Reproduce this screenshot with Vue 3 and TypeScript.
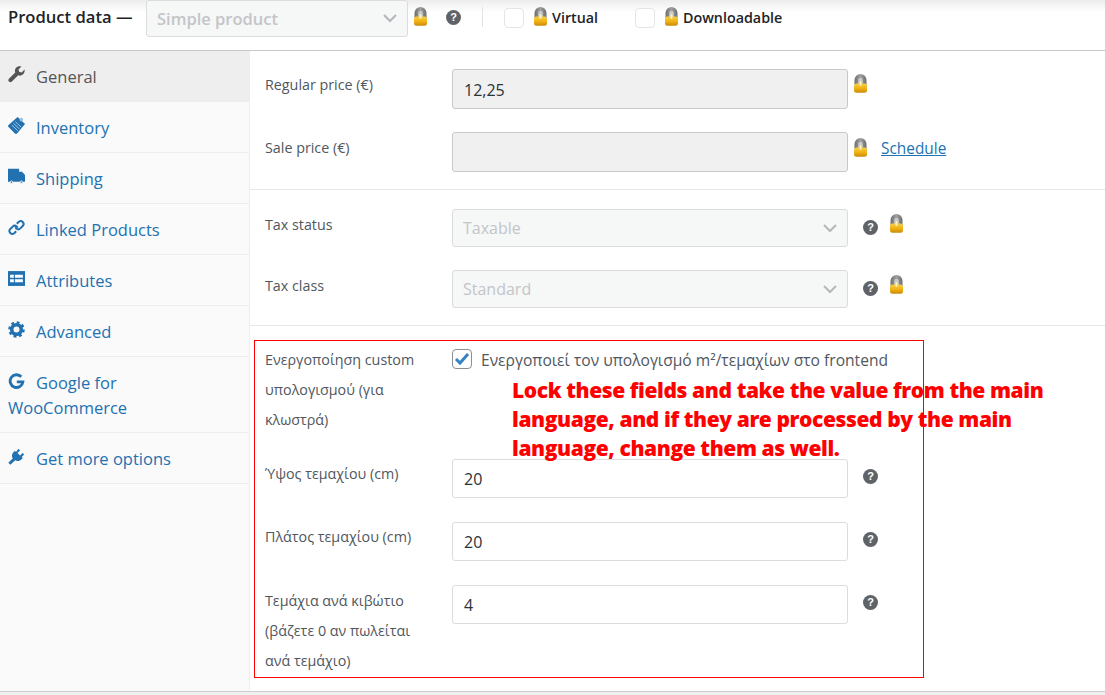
<script setup lang="ts">
const tabs = [
  { id: 'wrench', label: 'General', active: true },
  { id: 'inventory', label: 'Inventory' },
  { id: 'truck', label: 'Shipping' },
  { id: 'link', label: 'Linked Products' },
  { id: 'attr', label: 'Attributes' },
  { id: 'gear', label: 'Advanced' },
  { id: 'google', label: 'Google for WooCommerce', wrap: true },
  { id: 'plug', label: 'Get more options' },
]
</script>

<template>
  <div class="page">
    <svg width="0" height="0" class="defs">
      <defs>
        <linearGradient id="lockBody" x1="0" y1="0" x2="0" y2="1">
          <stop offset="0" stop-color="#f6cf4a" />
          <stop offset="0.5" stop-color="#f2b414" />
          <stop offset="1" stop-color="#c98a0a" />
        </linearGradient>
        <linearGradient id="lockShackle" x1="0" y1="0" x2="1" y2="0">
          <stop offset="0" stop-color="#6f6f6f" />
          <stop offset="0.5" stop-color="#a0a0a0" />
          <stop offset="1" stop-color="#6c6c6c" />
        </linearGradient>
        <symbol id="lock" viewBox="0 0 15 20">
          <path d="M1.500 12V7a6 6 0 0 1 12 0v5z" fill="url(#lockShackle)" />
          <path d="M5.200 12V7a2.300 2.300 0 0 1 4.600 0v5z" fill="#c8c8c8" />
          <rect x="1" y="10.500" width="13" height="9.300" rx="2.400" fill="url(#lockBody)" />
          <rect x="6.500" y="8" width="2" height="5" rx="1" fill="#fff0b8" />
        </symbol>
      </defs>
    </svg>

    <header class="topbar">
      <strong class="title">Product data —</strong>
      <div class="select top-select">
        <span>Simple product</span>
        <svg class="chev" width="16" height="10" viewBox="0 0 16 10"><path d="M2 2l6 6 6-6" fill="none" stroke="#b5b8bb" stroke-width="2" /></svg>
      </div>
      <svg class="lock top-lock"><use href="#lock" /></svg>
      <span class="help top-help">?</span>
      <span class="sep"></span>
      <span class="check"></span>
      <svg class="lock opt-lock"><use href="#lock" /></svg>
      <span class="opt virtual">Virtual</span>
      <span class="check"></span>
      <svg class="lock opt-lock"><use href="#lock" /></svg>
      <span class="opt">Downloadable</span>
    </header>

    <div class="body">
      <nav class="tabs">
        <a v-for="t in tabs" :key="t.id" class="tab" :class="{ active: t.active, wrap: t.wrap }">
          <svg class="ico" viewBox="0 0 16 16">
            <path v-if="t.id === 'wrench'" d="M15.600 3.400l-2.800 2.700-2.300-.6-.6-2.300L12.600.4C11-.2 9 .2 7.800 1.400 6.500 2.700 6.200 4.500 6.800 6L.9 11.900c-.8.8-.8 2 0 2.800s2 .8 2.800 0L9.600 8.800c1.500.6 3.300.3 4.600-1 1.200-1.200 1.700-3 1.400-4.400z" />
            <g v-else-if="t.id === 'inventory'">
              <path d="M9 0L16 6.500l-7.500 9a1.500 1.500 0 0 1-2 0L.5 9.500a1.500 1.500 0 0 1 0-2z" />
              <path d="M6.800 4.300l5.600 5.200M5.200 6l5.600 5.200M3.600 7.700l5.600 5.200" stroke="#d5e4f0" stroke-width=".7" fill="none" />
              <circle cx="12.500" cy="2.500" r="1.700" fill="#9cc0dc" />
            </g>
            <g v-else-if="t.id === 'truck'">
              <path d="M0 .8h10.500v2.700h2.800l2.700 3.200v6.300H0z" />
              <circle cx="3.300" cy="13.300" r="1.100" stroke="#fafafa" stroke-width=".8" />
              <circle cx="12.500" cy="13.300" r="1.100" stroke="#fafafa" stroke-width=".8" />
            </g>
            <g v-else-if="t.id === 'link'" fill="none" stroke-width="1.900" class="stroked">
              <path d="M6.800 9.200l2.400-2.400" />
              <path d="M8.300 4.500l1.900-1.900a2.700 2.700 0 0 1 3.800 3.800l-2.400 2.400a2.700 2.700 0 0 1-3.800 0" />
              <path d="M7.700 11.500l-1.900 1.900a2.700 2.700 0 0 1-3.800-3.800l2.400-2.400a2.700 2.700 0 0 1 3.800 0" />
            </g>
            <g v-else-if="t.id === 'attr'">
              <rect x="0" y="1" width="16" height="14" />
              <path d="M2 4.500h3.500v2.800H2zM2 8.700h3.500v2.800H2zM6.500 4.500H14v2.800H6.500zM6.500 8.700H14v2.800H6.500z" fill="#fff" />
            </g>
            <g v-else-if="t.id === 'gear'">
              <circle cx="8" cy="8" r="6.500" fill="none" stroke-width="2.600" stroke-dasharray="2.600 2.500" class="stroked" />
              <circle cx="8" cy="8" r="4.500" fill="none" stroke-width="3.400" class="stroked" />
            </g>
            <g v-else-if="t.id === 'google'" fill="none" stroke-width="2.700" class="stroked">
              <path d="M12.500 3.600A6 6 0 1 0 14 8.300H8.300" />
            </g>
            <path v-else d="M9.800.8L11.300 2.300 9 4.600l2.400 2.400 2.300-2.300 1.500 1.500-2.300 2.300 1 1-1.400 1.400c-1.600 1.600-4 1.800-5.700.7L2.200 15.700.3 13.800l4.100-4c-1.100-1.700-.9-4.100.7-5.700L6.500 2.700l1 1z" />
          </svg>
          <span>{{ t.label }}</span>
        </a>
      </nav>

      <main class="panel">
        <section class="group first">
          <div class="row price">
            <label>Regular price (€)</label>
            <div class="input locked">12,25</div>
            <svg class="lock field-lock"><use href="#lock" /></svg>
          </div>
          <div class="row price">
            <label>Sale price (€)</label>
            <div class="input locked"></div>
            <svg class="lock field-lock sale"><use href="#lock" /></svg>
            <a class="schedule">Schedule</a>
          </div>
        </section>

        <section class="group second">
          <div class="row tax">
            <label>Tax status</label>
            <div class="select">
              <span>Taxable</span>
              <svg class="chev" width="16" height="10" viewBox="0 0 16 10"><path d="M2 2l6 6 6-6" fill="none" stroke="#b5b8bb" stroke-width="2" /></svg>
            </div>
            <span class="help">?</span>
            <svg class="lock tax-lock"><use href="#lock" /></svg>
          </div>
          <div class="row tax">
            <label>Tax class</label>
            <div class="select">
              <span>Standard</span>
              <svg class="chev" width="16" height="10" viewBox="0 0 16 10"><path d="M2 2l6 6 6-6" fill="none" stroke="#b5b8bb" stroke-width="2" /></svg>
            </div>
            <span class="help">?</span>
            <svg class="lock tax-lock"><use href="#lock" /></svg>
          </div>
        </section>

        <section class="group third">
          <div class="note">
            <p>Lock these fields and take the value from the main language, and if they are processed by the main language, change them as well.</p>
          </div>
          <div class="row custom tall">
            <label class="multi first-label"><span>Ενεργοποίηση custom υπολογισμού (για κλωστρά)</span></label>
            <span class="tick">
              <svg width="16" height="14" viewBox="0 0 16 14"><path d="M2 7l4 4 8-9" fill="none" stroke="#3582c4" stroke-width="3" /></svg>
            </span>
            <span class="tick-label">Ενεργοποιεί τον υπολογισμό m²/τεμαχίων στο frontend</span>
          </div>
          <div class="row custom">
            <label>Ύψος τεμαχίου (cm)</label>
            <div class="input">20</div>
            <span class="help">?</span>
          </div>
          <div class="row custom">
            <label>Πλάτος τεμαχίου (cm)</label>
            <div class="input">20</div>
            <span class="help">?</span>
          </div>
          <div class="row custom last">
            <label class="multi"><span>Τεμάχια ανά κιβώτιο (βάζετε 0 αν πωλείται ανά τεμάχιο)</span></label>
            <div class="input">4</div>
            <span class="help">?</span>
          </div>
        </section>
      </main>
    </div>
    <div class="foot"></div>
  </div>
</template>

<style>
html, body { margin: 0; background: #fff; }
</style>

<style scoped>
.page {
  width: 1105px;
  height: 695px;
  overflow: hidden;
  font-family: "Open Sans", "Noto Sans", sans-serif;
  font-size: 14px;
  color: #50575e;
  display: flex;
  flex-direction: column;
}
.defs { position: absolute; }
.topbar {
  height: 51px;
  flex: none;
  box-sizing: border-box;
  display: flex;
  align-items: flex-start;
  padding-left: 8px;
  border-bottom: 1px solid #c8c8c8;
  background: linear-gradient(#ededee, #fff 12px);
}
.title { width: 138px; margin-top: 5px; font-size: 16.600px; font-weight: 600; color: #1d2327; line-height: 24px; white-space: nowrap; }
.select {
  width: 396px;
  height: 38px;
  box-sizing: border-box;
  border: 1px solid #dcdcde;
  border-radius: 3px;
  background: #f6f7f7;
  color: #c3c5c8;
  font-size: 16px;
  display: flex;
  align-items: center;
  justify-content: space-between;
  padding: 0 9px 0 10px;
}
.top-select { width: 262px; height: 37px; margin-top: 0; font-weight: 600; font-size: 16.500px; padding-bottom: 1px; }
.chev { flex: none; }
.lock { width: 15px; height: 20px; flex: none; }
.top-lock { margin: 6px 0 0 5px; }
.help {
  width: 15px;
  height: 15px;
  border-radius: 50%;
  background: #5f6368;
  color: #fff;
  font: 700 11px/15px "Liberation Sans", sans-serif;
  text-align: center;
  flex: none;
}
.top-help { margin: 10px 0 0 18px; }
.sep { width: 1px; height: 20px; background: #e2e2e2; margin: 7px 21px 0 21px; }
.check {
  width: 20px;
  height: 20px;
  margin-top: 8px;
  box-sizing: border-box;
  border: 1px solid #e4e5e6;
  border-radius: 4px;
  background: #fff;
}
.opt-lock { margin: 6px 0 0 9px; }
.opt { margin: 6px 0 0 4px; line-height: 24px; font-weight: 600; color: #1d2327; font-size: 14.300px; }
.virtual { width: 83px; }
.body { flex: 1; display: flex; min-height: 0; }
.tabs {
  width: 250px;
  flex: none;
  box-sizing: border-box;
  background: #fafafa;
  border-right: 1px solid #eee;
}
.tab {
  display: flex;
  height: 51px;
  box-sizing: border-box;
  border-bottom: 1px solid #eee;
  padding: 13px 8px 0;
  line-height: 25px;
  color: #2271b1;
  font-size: 16.500px;
}
.tab.active { background: #eee; color: #555; border-bottom: 0; }
.tab.wrap { display: block; height: 76px; padding-right: 60px; }
.tab.wrap .ico { display: inline-block; vertical-align: -1px; margin-right: 11px; margin-top: 0; }
.ico { width: 17px; height: 17px; flex: none; margin: 2px 11px 0 0; fill: #2271b1; }
.tab.active .ico { fill: #555; }
.stroked { stroke: #2271b1; fill: none; }
.panel { flex: 1; min-width: 0; }
.group { border-bottom: 1px solid #e6e6e6; padding-left: 15px; }
.first { height: 139px; box-sizing: border-box; padding-top: 18px; }
.second { height: 136px; box-sizing: border-box; padding-top: 19px; }
.third { position: relative; border-bottom: 0; padding-top: 14px; }
.row { display: flex; align-items: flex-start; }
.row label { width: 187px; flex: none; color: #50575e; line-height: 30px; font-size: 14.300px; }
.multi span { display: block; width: 165px; }
.price { height: 40px; margin-bottom: 23px; }
.price label { margin-top: 1px; }
.tax { height: 38px; margin-bottom: 23px; }
.tax label { margin-top: 1px; }
.input {
  width: 396px;
  height: 40px;
  box-sizing: border-box;
  border: 1px solid #dcdcde;
  border-radius: 3px;
  background: #fff;
  color: #2c3338;
  font-size: 16px;
  line-height: 38px;
  padding: 1px 11px 0;
  flex: none;
}
.custom .input { height: 39px; line-height: 37px; }
.input.locked { background: #f0f0f1; border-color: #c9c9c9; }
.field-lock { margin: 4px 0 0 5px; }
.field-lock.sale { margin-top: 5px; }
.schedule { margin: 5px 0 0 13px; color: #2271b1; text-decoration: underline; font-size: 15.400px; line-height: 24px; }
.tax .help { margin: 11px 0 0 15px; }
.tax-lock { margin: 4px 0 0 11px; }
.custom { height: 39px; margin-bottom: 24px; }
.custom > label { margin-top: 0; }
.custom .help { margin: 10px 0 0 15px; }
.tall { height: 119px; margin-bottom: 0; }
.row .first-label { margin-top: 5px; }
.multi { display: block; }
.tick {
  width: 20px;
  height: 20px;
  margin-top: 9px;
  box-sizing: border-box;
  border: 1px solid #8c8f94;
  border-radius: 4px;
  display: flex;
  align-items: center;
  justify-content: center;
  flex: none;
}
.tick-label { margin: 8px 0 0 9px; line-height: 24px; font-size: 15.600px; white-space: nowrap; }
.last { height: 90px; margin-bottom: 0; }
.last > label { margin-top: 1px; }
.note {
  position: absolute;
  left: 4px;
  top: 14px;
  width: 670px;
  height: 338px;
  box-sizing: border-box;
  border: 1px solid #f00;
  pointer-events: none;
  z-index: 1;
}
.note p {
  position: absolute;
  left: 257px;
  top: 35px;
  width: 540px;
  margin: 0;
  color: #f00;
  font-weight: 800;
  font-size: 21px;
  letter-spacing: -0.4px;
  line-height: 29px;
}
.foot { height: 3px; flex: none; background: #f0f0f1; border-top: 1px solid #ccc; }
</style>
